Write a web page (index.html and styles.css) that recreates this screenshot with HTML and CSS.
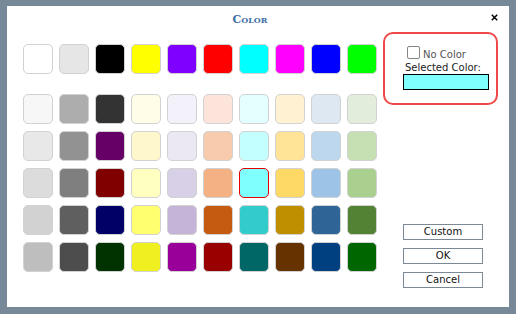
FILE: index.html
```html
<!DOCTYPE html>
<html>
<head>
<meta charset="utf-8">
<link rel="stylesheet" href="styles.css">
</head>
<body>
<div class="dialog">
  <div class="header">
    <span class="title">Color</span>
    <span class="close"><svg width="7" height="7" viewBox="0 0 7 7"><path d="M0.8 0.8L6.2 6.2M6.2 0.8L0.8 6.2" stroke="#000" stroke-width="1.5" fill="none"/></svg></span>
  </div>
  <div class="body">
    <div class="palette">
      <div class="row top">
        <div class="sw" style="background:#ffffff"></div>
        <div class="sw" style="background:#e6e6e6"></div>
        <div class="sw" style="background:#000000"></div>
        <div class="sw" style="background:#ffff00"></div>
        <div class="sw" style="background:#8000ff"></div>
        <div class="sw" style="background:#ff0000"></div>
        <div class="sw" style="background:#00ffff"></div>
        <div class="sw" style="background:#ff00ff"></div>
        <div class="sw" style="background:#0000ff"></div>
        <div class="sw" style="background:#00ff00"></div>
      </div>
      <div class="grid">
        <div class="sw" style="background:#f7f7f7"></div>
        <div class="sw" style="background:#adadad"></div>
        <div class="sw" style="background:#333333"></div>
        <div class="sw" style="background:#fffce8"></div>
        <div class="sw" style="background:#f3f1f9"></div>
        <div class="sw" style="background:#fce4da"></div>
        <div class="sw" style="background:#e4ffff"></div>
        <div class="sw" style="background:#fff1d1"></div>
        <div class="sw" style="background:#dde8f3"></div>
        <div class="sw" style="background:#e2eedb"></div>

        <div class="sw" style="background:#e8e8e8"></div>
        <div class="sw" style="background:#929292"></div>
        <div class="sw" style="background:#660066"></div>
        <div class="sw" style="background:#fff7cc"></div>
        <div class="sw" style="background:#ebe7f3"></div>
        <div class="sw" style="background:#f7cbac"></div>
        <div class="sw" style="background:#c4ffff"></div>
        <div class="sw" style="background:#ffe497"></div>
        <div class="sw" style="background:#bdd7ee"></div>
        <div class="sw" style="background:#c6e0b4"></div>

        <div class="sw" style="background:#dcdcdc"></div>
        <div class="sw" style="background:#7f7f7f"></div>
        <div class="sw" style="background:#800000"></div>
        <div class="sw" style="background:#ffffc0"></div>
        <div class="sw" style="background:#d8d0e6"></div>
        <div class="sw" style="background:#f4b183"></div>
        <div class="sw selected" style="background:#80ffff"></div>
        <div class="sw" style="background:#ffd966"></div>
        <div class="sw" style="background:#9dc3e6"></div>
        <div class="sw" style="background:#a9d08e"></div>

        <div class="sw" style="background:#d2d2d2"></div>
        <div class="sw" style="background:#5f5f5f"></div>
        <div class="sw" style="background:#000066"></div>
        <div class="sw" style="background:#ffff70"></div>
        <div class="sw" style="background:#c6b4d8"></div>
        <div class="sw" style="background:#c55a11"></div>
        <div class="sw" style="background:#33cccc"></div>
        <div class="sw" style="background:#bf8f00"></div>
        <div class="sw" style="background:#2f6496"></div>
        <div class="sw" style="background:#548235"></div>

        <div class="sw" style="background:#bebebe"></div>
        <div class="sw" style="background:#4d4d4d"></div>
        <div class="sw" style="background:#003300"></div>
        <div class="sw" style="background:#f0f020"></div>
        <div class="sw" style="background:#990099"></div>
        <div class="sw" style="background:#990000"></div>
        <div class="sw" style="background:#006666"></div>
        <div class="sw" style="background:#663300"></div>
        <div class="sw" style="background:#003f80"></div>
        <div class="sw" style="background:#006600"></div>
      </div>
    </div>
    <div class="side">
      <div class="current">
        <label class="nocolor"><input type="checkbox" class="chk"><span>No Color</span></label>
        <div class="sel-label">Selected Color:</div>
        <div class="sel-box"></div>
      </div>
      <div class="buttons">
        <button class="btn">Custom</button>
        <button class="btn">OK</button>
        <button class="btn">Cancel</button>
      </div>
    </div>
  </div>
</div>
</body>
</html>
```
FILE: styles.css
```css
html, body {
  margin: 0;
  padding: 0;
  background: #778899;
  width: 516px;
  height: 314px;
  overflow: hidden;
}
body {
  padding: 6px 7px;
  box-sizing: border-box;
}
.dialog {
  position: relative;
  background: #ffffff;
  width: 502px;
  height: 301px;
  font-family: "DejaVu Sans", Verdana, sans-serif;
  font-size: 10px;
}
.header {
  height: 26px;
  display: flex;
  justify-content: center;
  align-items: center;
  padding-right: 16px;
}
.title {
  font-family: "DejaVu Serif", Georgia, serif;
  font-weight: bold;
  font-variant: small-caps;
  font-size: 11px;
  color: #3d6fa6;
}
.close {
  position: absolute;
  right: 11px;
  top: 8px;
  width: 7px;
  height: 7px;
  display: block;
  line-height: 0;
}
.body {
  display: flex;
  padding-left: 16px;
}
.palette {
  padding-top: 12px;
}
.row {
  display: flex;
  gap: 6px;
}
.grid {
  margin-top: 20px;
  display: grid;
  grid-template-columns: repeat(10, 30px);
  column-gap: 6px;
  row-gap: 7px;
}
.sw {
  width: 30px;
  height: 30px;
  box-sizing: border-box;
  border: 1px solid #d2d2d2;
  border-radius: 5px;
}
.sw.selected {
  border-color: #e60000;
}
.side {
  margin-left: 6px;
  display: flex;
  flex-direction: column;
}
.current {
  width: 115px;
  height: 73px;
  box-sizing: border-box;
  border: 2px solid #f04848;
  border-radius: 10px;
  padding: 12px 0 0 18px;
}
.nocolor {
  display: flex;
  align-items: center;
  color: #555;
  margin-left: 4px;
  height: 13px;
}
.chk {
  appearance: none;
  -webkit-appearance: none;
  margin: 0 3px 0 0;
  width: 13px;
  height: 13px;
  box-sizing: border-box;
  border: 1px solid #858585;
  border-radius: 2px;
  background: #fff;
}
.nocolor span {
  margin-top: 4px;
}
.sel-label {
  color: #222;
  margin-top: 3px;
  margin-left: 2px;
  line-height: 12px;
}
.sel-box {
  width: 86px;
  height: 16px;
  box-sizing: border-box;
  border: 1px solid #000;
  background: #80ffff;
}
.buttons {
  margin-top: 119px;
  margin-left: 20px;
  display: flex;
  flex-direction: column;
  gap: 8px;
}
.btn {
  width: 80px;
  height: 16px;
  padding: 0;
  box-sizing: border-box;
  border: 1px solid #7b8896;
  background: #fff;
  font-family: "DejaVu Sans", Verdana, sans-serif;
  font-size: 10px;
  color: #111;
  line-height: 14px;
}
```
